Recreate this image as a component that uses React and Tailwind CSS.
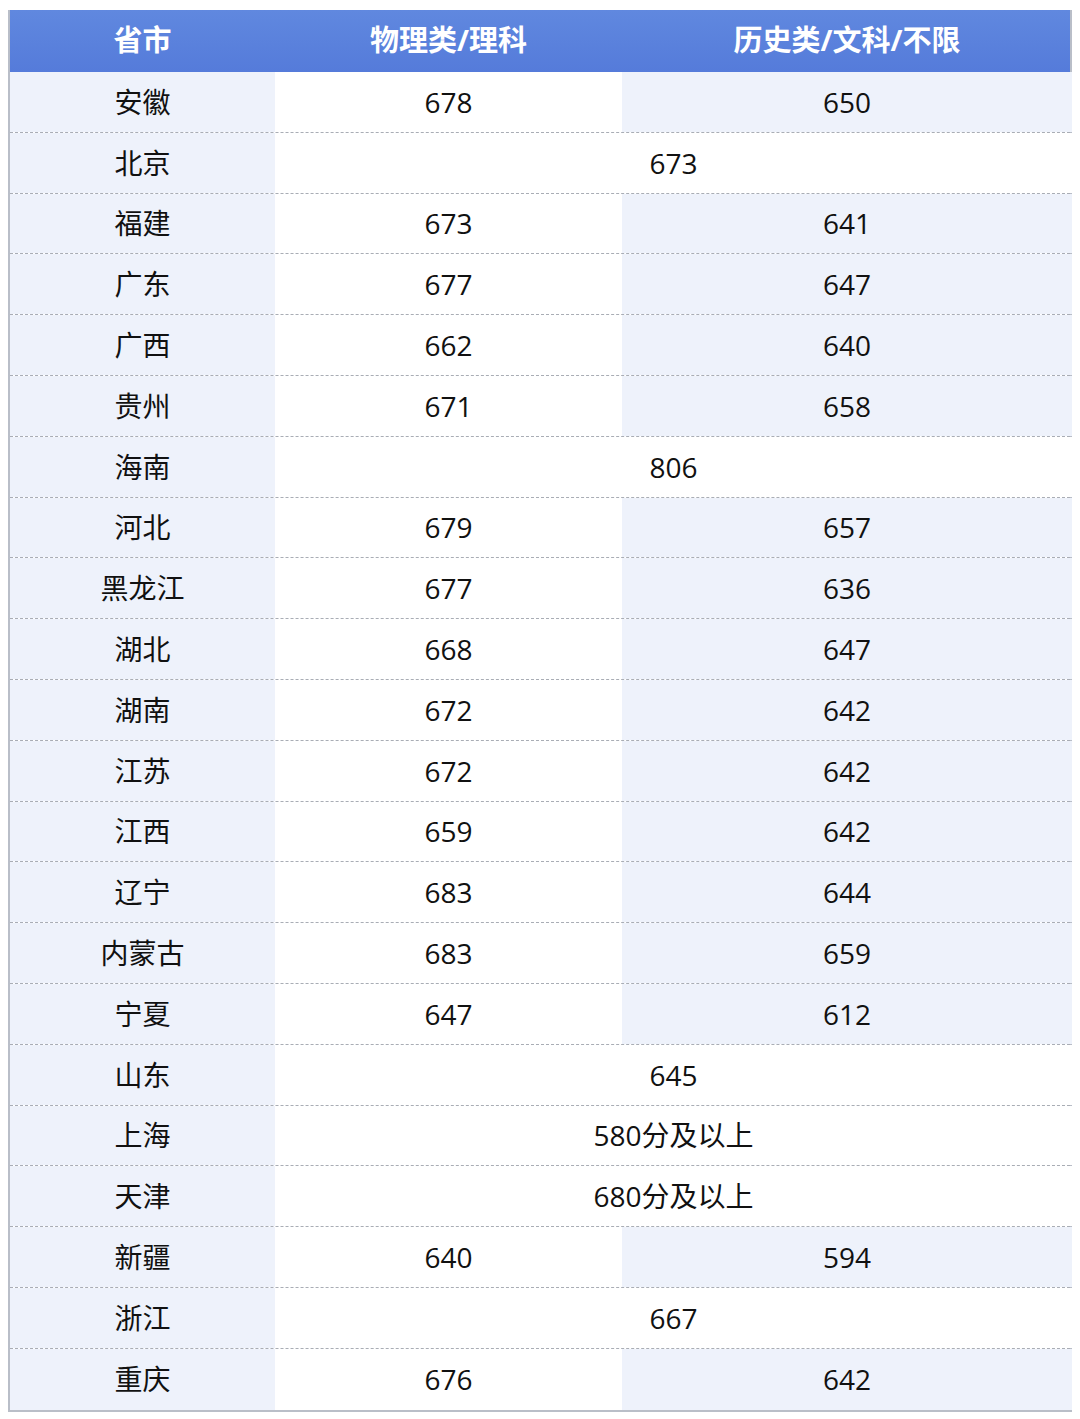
const rows = [
  ['安徽', '678', '650'],
  ['北京', '673'],
  ['福建', '673', '641'],
  ['广东', '677', '647'],
  ['广西', '662', '640'],
  ['贵州', '671', '658'],
  ['海南', '806'],
  ['河北', '679', '657'],
  ['黑龙江', '677', '636'],
  ['湖北', '668', '647'],
  ['湖南', '672', '642'],
  ['江苏', '672', '642'],
  ['江西', '659', '642'],
  ['辽宁', '683', '644'],
  ['内蒙古', '683', '659'],
  ['宁夏', '647', '612'],
  ['山东', '645'],
  ['上海', '580分及以上'],
  ['天津', '680分及以上'],
  ['新疆', '640', '594'],
  ['浙江', '667'],
  ['重庆', '676', '642'],
];

const font = { fontFamily: '"Open Sans", "Noto Sans CJK SC", sans-serif' };

export default function App() {
  return (
    <div className="w-[1080px] h-[1419px] bg-white pt-[10px] pl-[8px]" style={font}>
      <div className="w-[1064px] border-l-2 border-r-2 border-b-2 border-[#b9bec8]">
        <div className="grid grid-cols-[265px_347px_450px] h-[62px] bg-gradient-to-b from-[#6088df] to-[#557bda] text-white text-[29px] font-bold">
          <div className="flex items-center justify-center pb-[2px]">省市</div>
          <div className="flex items-center justify-center pb-[2px]">物理类/理科</div>
          <div className="flex items-center justify-center pb-[2px]">历史类/文科/不限</div>
        </div>
        {rows.map((r, i) => (
          <div
            key={r[0]}
            className={`grid grid-cols-[265px_347px_450px] h-[60.8px] text-[28px] text-[#111] ${i < rows.length - 1 ? 'border-b border-dashed border-[#a9adb5]' : ''}`}
          >
            <div className="flex items-center justify-center bg-[#eef2fb]">{r[0]}</div>
            {r.length === 3 ? (
              <>
                <div className="flex items-center justify-center bg-white">{r[1]}</div>
                <div className="flex items-center justify-center bg-[#eef2fb]">{r[2]}</div>
              </>
            ) : (
              <div className="col-span-2 flex items-center justify-center bg-white">{r[1]}</div>
            )}
          </div>
        ))}
      </div>
    </div>
  );
}
